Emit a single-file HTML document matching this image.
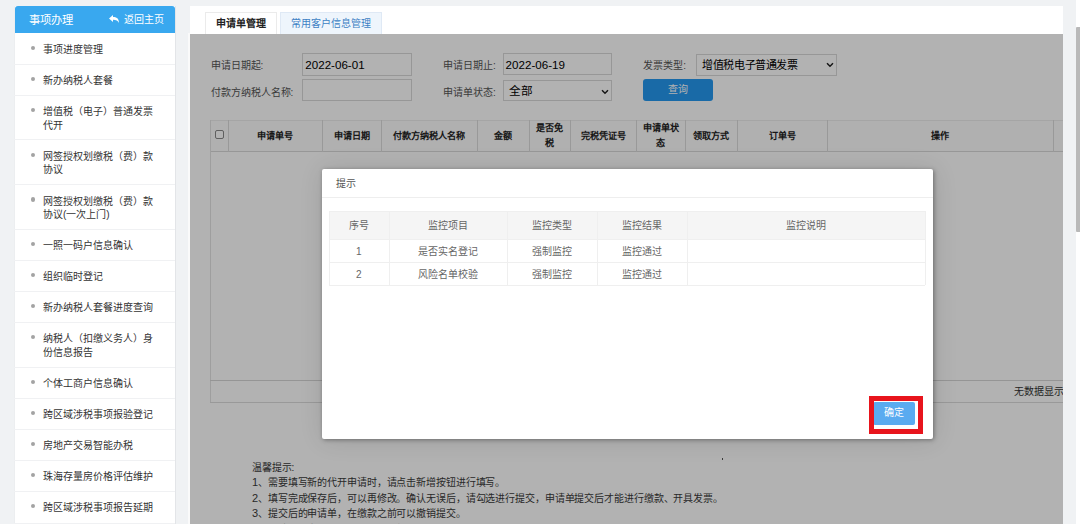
<!DOCTYPE html>
<html lang="zh-CN"><head><meta charset="utf-8">
<style>
*{box-sizing:border-box;margin:0;padding:0}
html,body{width:1080px;height:524px;overflow:hidden;background:#f0f2f4;font-family:"Liberation Sans",sans-serif;}
.abs{position:absolute}
#side{position:absolute;left:14px;top:6px;width:162px;height:530px;background:#fff;border-right:1px solid #e3e5e8;box-shadow:inset 1px 0 0 #eceef0}
#shead{position:absolute;left:1px;top:0;width:160px;height:26.5px;background:#39a8ef;border-radius:3px 3px 0 0;color:#fff;}
.mi{position:absolute;left:0;width:161px;border-bottom:1px solid #f0f1f3;}
.mi .dot{position:absolute;left:16.8px;width:4.2px;height:4.2px;border-radius:50%;background:#a3a3a3;}
.mi .t{position:absolute;left:29px;font-size:10px;line-height:13.3px;color:#333;white-space:nowrap}
#main{position:absolute;left:190px;top:6px;width:873px;height:530px;background:#fff;}
.tab{position:absolute;top:6px;height:21.5px;font-size:10px;line-height:21px;text-align:center;}
#frame{position:absolute;left:0;top:27.5px;width:872px;height:500px;background:#fff;overflow:hidden}
.lbl{position:absolute;font-size:10px;color:#555;white-space:nowrap;line-height:12px}
.inp{position:absolute;border:1px solid #d9d9d9;background:#fff;font-size:11.6px;color:#000;line-height:22px;padding-left:2px;white-space:nowrap}
#shade{position:absolute;left:190px;top:33.5px;width:873px;height:500px;background:rgba(0,0,0,0.3)}
#modal{position:absolute;left:322px;top:169px;width:611px;height:270px;background:#fff;border-radius:2px;box-shadow:1px 1px 4px rgba(0,0,0,0.35),1px 1px 24px rgba(0,0,0,0.12);}
.th{position:absolute;font-size:9.1px;font-weight:bold;color:#222;text-align:center;line-height:14.8px}
.mt{position:absolute;font-size:10px;color:#666;text-align:center;line-height:12px;white-space:nowrap}
.dg{font-size:11px;line-height:10px}
</style></head><body>

<div id="side">
  <div id="shead">
    <div class="abs" style="left:14px;top:6.8px;font-size:11.3px;line-height:14px;">事项办理</div>
    <svg class="abs" style="left:94px;top:9px" width="10" height="8" viewBox="0 0 10 8"><path d="M0 3.5 L4 0 L4 2 C7.5 2 10 3.5 10 8 C9 5.5 7 4.8 4 4.8 L4 7 Z" fill="#fff"/></svg>
    <div class="abs" style="left:109px;top:7.4px;font-size:10px;line-height:13px;">返回主页</div>
  </div>
<div class="mi" style="top:27.50px;height:31.90px"><div class="dot" style="top:12.40px"></div><div class="t" style="top:9.60px">事项进度管理</div></div>
<div class="mi" style="top:59.40px;height:30.80px"><div class="dot" style="top:11.85px"></div><div class="t" style="top:9.05px">新办纳税人套餐</div></div>
<div class="mi" style="top:90.20px;height:44.20px"><div class="dot" style="top:11.90px"></div><div class="t" style="top:9.10px">增值税（电子）普通发票<br>代开</div></div>
<div class="mi" style="top:134.40px;height:44.80px"><div class="dot" style="top:12.20px"></div><div class="t" style="top:9.40px">网签授权划缴税（费）款<br>协议</div></div>
<div class="mi" style="top:179.20px;height:44.80px"><div class="dot" style="top:12.20px"></div><div class="t" style="top:9.40px">网签授权划缴税（费）款<br>协议(一次上门)</div></div>
<div class="mi" style="top:224.00px;height:31.20px"><div class="dot" style="top:12.05px"></div><div class="t" style="top:9.25px">一照一码户信息确认</div></div>
<div class="mi" style="top:255.20px;height:31.00px"><div class="dot" style="top:11.95px"></div><div class="t" style="top:9.15px">组织临时登记</div></div>
<div class="mi" style="top:286.20px;height:31.10px"><div class="dot" style="top:12.00px"></div><div class="t" style="top:9.20px">新办纳税人套餐进度查询</div></div>
<div class="mi" style="top:317.30px;height:44.30px"><div class="dot" style="top:11.95px"></div><div class="t" style="top:9.15px">纳税人（扣缴义务人）身<br>份信息报告</div></div>
<div class="mi" style="top:361.60px;height:31.40px"><div class="dot" style="top:12.15px"></div><div class="t" style="top:9.35px">个体工商户信息确认</div></div>
<div class="mi" style="top:393.00px;height:31.00px"><div class="dot" style="top:11.95px"></div><div class="t" style="top:9.15px">跨区域涉税事项报验登记</div></div>
<div class="mi" style="top:424.00px;height:31.00px"><div class="dot" style="top:11.95px"></div><div class="t" style="top:9.15px">房地产交易智能办税</div></div>
<div class="mi" style="top:455.00px;height:31.00px"><div class="dot" style="top:11.95px"></div><div class="t" style="top:9.15px">珠海存量房价格评估维护</div></div>
<div class="mi" style="top:486.00px;height:31.60px"><div class="dot" style="top:12.25px"></div><div class="t" style="top:9.45px">跨区域涉税事项报告延期</div></div>
</div>

<div id="main">
  <div class="tab" style="left:15px;width:71.5px;border:1px solid #ebebeb;border-bottom:none;background:#fff;font-weight:bold;color:#222">申请单管理</div>
  <div class="tab" style="left:90px;width:102px;border:1px solid #dfe9f5;border-bottom:none;background:#eef5fc;color:#3c7fc4">常用客户信息管理</div>
  <div id="frame"></div>
</div>


<div id="fc" style="position:absolute;left:0;top:0;width:1080px;height:524px;clip-path:inset(33.5px 17px 0 190px)">
  <div class="lbl" style="left:210.5px;top:59.5px">申请日期起:</div>
  <div class="lbl" style="left:210.5px;top:87px">付款方纳税人名称:</div>
  <div class="inp" style="left:302.3px;top:53.1px;width:109.6px;height:22.5px">2022-06-01</div>
  <div class="inp" style="left:302.3px;top:79.2px;width:109.6px;height:22.2px"></div>
  <div class="lbl" style="left:443px;top:59.5px">申请日期止:</div>
  <div class="lbl" style="left:443px;top:86.6px">申请单状态:</div>
  <div class="inp" style="left:502.6px;top:53.3px;width:109.4px;height:22px">2022-06-19</div>
  <div class="inp" style="left:502.6px;top:80px;width:109.4px;height:20.5px;line-height:19px;padding-left:5px">全部<svg class="abs" style="right:1.5px;top:7.5px" width="8" height="6" viewBox="0 0 8 6"><path d="M1 1.2 L4 4.2 L7 1.2" stroke="#222" stroke-width="1.5" fill="none"/></svg></div>
  <div class="lbl" style="left:643.2px;top:59.5px">发票类型:</div>
  <div class="inp" style="left:695.8px;top:54.2px;width:141px;height:21.4px;padding-left:5.5px;font-size:11px;letter-spacing:-0.42px;line-height:21px">增值税电子普通发票<svg class="abs" style="right:1.5px;top:7px" width="8" height="6" viewBox="0 0 8 6"><path d="M1 1.2 L4 4.2 L7 1.2" stroke="#222" stroke-width="1.5" fill="none"/></svg></div>
  <div class="abs" style="left:642.8px;top:79.2px;width:70.3px;height:21.4px;background:#2498f0;border-radius:3px;color:#fff;font-size:10px;line-height:22px;text-align:center">查询</div>
  <div class="abs" style="left:210px;top:119.5px;width:860px;height:32.5px;background:#fcfcfc;border-top:1px solid #ececec;border-bottom:1px solid #d9d9d9"></div>
<div class="abs" style="left:210px;top:119.5px;width:1px;height:282.9px;background:#e3e3e3"></div>
<div class="abs" style="left:228px;top:119.5px;width:1px;height:32.5px;background:#dcdcdc"></div>
<div class="abs" style="left:322px;top:119.5px;width:1px;height:32.5px;background:#dcdcdc"></div>
<div class="abs" style="left:381px;top:119.5px;width:1px;height:32.5px;background:#dcdcdc"></div>
<div class="abs" style="left:477px;top:119.5px;width:1px;height:32.5px;background:#dcdcdc"></div>
<div class="abs" style="left:529px;top:119.5px;width:1px;height:32.5px;background:#dcdcdc"></div>
<div class="abs" style="left:570px;top:119.5px;width:1px;height:32.5px;background:#dcdcdc"></div>
<div class="abs" style="left:636px;top:119.5px;width:1px;height:32.5px;background:#dcdcdc"></div>
<div class="abs" style="left:685px;top:119.5px;width:1px;height:32.5px;background:#dcdcdc"></div>
<div class="abs" style="left:737px;top:119.5px;width:1px;height:32.5px;background:#dcdcdc"></div>
<div class="abs" style="left:827px;top:119.5px;width:1px;height:32.5px;background:#dcdcdc"></div>
<div class="abs" style="left:1053px;top:119.5px;width:1px;height:32.5px;background:#dcdcdc"></div>
<div class="th" style="left:228px;width:94px;top:128.85px">申请单号</div>
<div class="th" style="left:322px;width:59px;top:128.85px">申请日期</div>
<div class="th" style="left:381px;width:96px;top:128.85px">付款方纳税人名称</div>
<div class="th" style="left:477px;width:52px;top:128.85px">金额</div>
<div class="th" style="left:529px;width:41px;top:121.45px">是否免<br>税</div>
<div class="th" style="left:570px;width:66px;top:128.85px">完税凭证号</div>
<div class="th" style="left:636px;width:49px;top:121.45px">申请单状<br>态</div>
<div class="th" style="left:685px;width:52px;top:128.85px">领取方式</div>
<div class="th" style="left:737px;width:90px;top:128.85px">订单号</div>
<div class="th" style="left:827px;width:226px;top:128.85px">操作</div>
<div class="abs" style="left:215.2px;top:130.2px;width:8.4px;height:8.4px;border:1px solid #888;border-radius:2px;background:#fff"></div>
<div class="abs" style="left:210px;top:380.1px;width:860px;height:1px;background:#d6d6d6"></div>
<div class="abs" style="left:210px;top:401.9px;width:860px;height:1px;background:#dcdcdc"></div>
<div class="abs" style="left:1013.8px;top:386px;font-size:10px;line-height:12px;color:#333;white-space:nowrap">无数据显示</div>
  <div class="abs" style="left:721.5px;top:458px;width:1.5px;height:2px;background:#555"></div>
  <div class="abs" style="left:252px;top:460px;font-size:10px;letter-spacing:-0.11px;line-height:15.4px;color:#3a3a3a;white-space:nowrap">温馨提示:<br><span class="dg">1</span>、需要填写新的代开申请时，请点击新增按钮进行填写。<br><span class="dg">2</span>、填写完成保存后，可以再修改。确认无误后，请勾选进行提交，申请单提交后才能进行缴款、开具发票。<br><span class="dg">3</span>、提交后的申请单，在缴款之前可以撤销提交。<br><span class="dg">4</span>、申请单状态为待缴款时可以进行缴款。</div>
</div>

<div class="abs" style="left:188px;top:32.5px;width:2px;height:492px;background:#fafafa"></div>
<div id="shade"></div>

<div id="modal">
  <div class="abs" style="left:14px;top:9px;font-size:10px;color:#555;line-height:12px">提示</div>
  <div class="abs" style="left:0;top:27.5px;width:611px;height:1px;background:#eee"></div>
<div class="abs" style="left:7px;top:42px;width:596px;height:28px;background:#f5f5f5"></div>
<div class="abs" style="left:7px;top:42px;width:596px;height:1px;background:#efefef"></div>
<div class="abs" style="left:7px;top:70px;width:596px;height:1px;background:#efefef"></div>
<div class="abs" style="left:7px;top:93px;width:596px;height:1px;background:#efefef"></div>
<div class="abs" style="left:7px;top:116px;width:596px;height:1px;background:#efefef"></div>
<div class="abs" style="left:7px;top:42px;width:1px;height:74px;background:#efefef"></div>
<div class="abs" style="left:66.60000000000002px;top:42px;width:1px;height:74px;background:#efefef"></div>
<div class="abs" style="left:185px;top:42px;width:1px;height:74px;background:#efefef"></div>
<div class="abs" style="left:275px;top:42px;width:1px;height:74px;background:#efefef"></div>
<div class="abs" style="left:365px;top:42px;width:1px;height:74px;background:#efefef"></div>
<div class="abs" style="left:603px;top:42px;width:1px;height:74px;background:#efefef"></div>
<div class="mt" style="left:7px;width:59.60000000000002px;top:51.00px">序号</div>
<div class="mt" style="left:66.60000000000002px;width:118.39999999999998px;top:51.00px">监控项目</div>
<div class="mt" style="left:185px;width:90px;top:51.00px">监控类型</div>
<div class="mt" style="left:275px;width:90px;top:51.00px">监控结果</div>
<div class="mt" style="left:365px;width:238px;top:51.00px">监控说明</div>
<div class="mt" style="left:7px;width:59.60000000000002px;top:76.50px">1</div>
<div class="mt" style="left:66.60000000000002px;width:118.39999999999998px;top:76.50px">是否实名登记</div>
<div class="mt" style="left:185px;width:90px;top:76.50px">强制监控</div>
<div class="mt" style="left:275px;width:90px;top:76.50px">监控通过</div>
<div class="mt" style="left:7px;width:59.60000000000002px;top:99.50px">2</div>
<div class="mt" style="left:66.60000000000002px;width:118.39999999999998px;top:99.50px">风险名单校验</div>
<div class="mt" style="left:185px;width:90px;top:99.50px">强制监控</div>
<div class="mt" style="left:275px;width:90px;top:99.50px">监控通过</div>
<div class="abs" style="left:551.4px;top:233px;width:41.3px;height:22.7px;background:#5aabf0;border-radius:2px;color:#fff;font-size:10px;line-height:22.7px;text-align:center">确定</div>
<div class="abs" style="left:547px;top:227px;width:54px;height:38px;border:5px solid #e8141c"></div>
</div>
<div class="abs" style="left:1075.5px;top:0;width:4.5px;height:524px;background:#fff"></div>
<div class="abs" style="left:1076px;top:27px;width:8px;height:205px;background:#b9b9b9;border-radius:1px"></div>

</body></html>
